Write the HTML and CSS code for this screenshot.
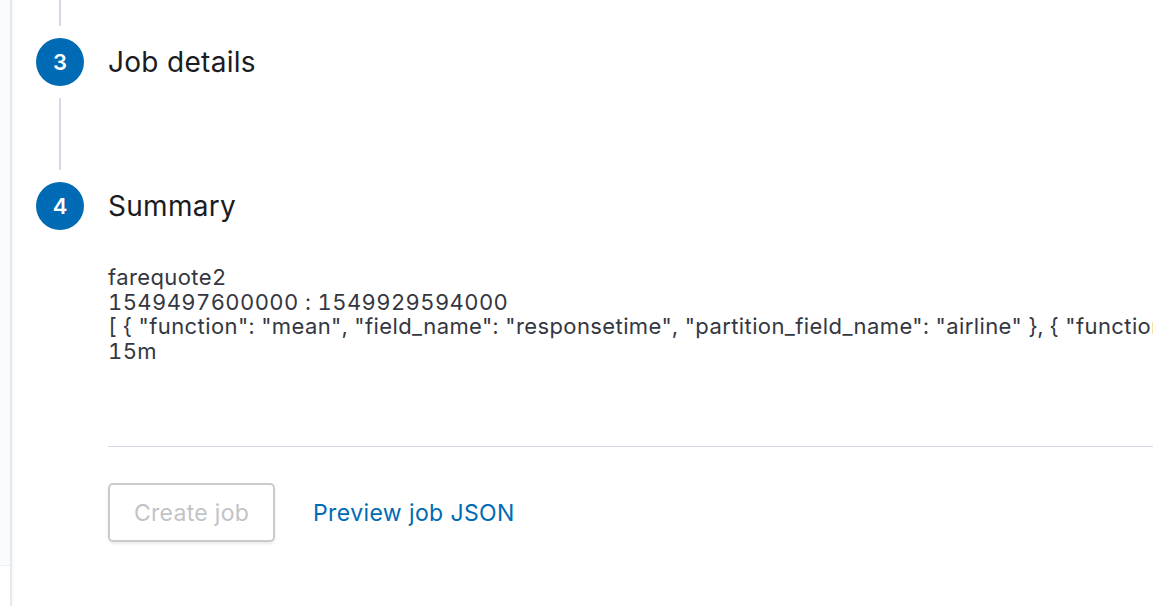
FILE: index.html
```html
<!DOCTYPE html>
<html>
<head>
<meta charset="utf-8">
<link rel="stylesheet" href="styles.css">
</head>
<body>
<div class="page">
  <div class="side">
    <div class="side-fill"></div>
    <div class="side-bottom"></div>
  </div>
  <div class="panel">
    <div class="steps">
      <div class="step">
        <div class="rail">
          <div class="line line-top"></div>
        </div>
      </div>
      <div class="step">
        <div class="rail">
          <div class="num">3</div>
          <div class="line line-mid"></div>
        </div>
        <div class="content">
          <h2 class="title">Job details</h2>
        </div>
      </div>
      <div class="step">
        <div class="rail">
          <div class="num">4</div>
        </div>
        <div class="content">
          <h2 class="title">Summary</h2>
          <div class="summary">
            <div>farequote2</div>
            <div>1549497600000 : 1549929594000</div>
            <div class="nowrap">[ { "function": "mean", "field_name": "responsetime", "partition_field_name": "airline" }, { "function": "mean", "field_name": "responsetime" } ]</div>
            <div>15m</div>
          </div>
          <hr class="rule">
          <div class="actions">
            <button class="btn" disabled>Create job</button>
            <a class="link" href="#">Preview job JSON</a>
          </div>
        </div>
      </div>
    </div>
  </div>
</div>
</body>
</html>
```

FILE: styles.css
```css
html, body {
  margin: 0;
  padding: 0;
  background: #ffffff;
  overflow: hidden;
}
body {
  font-family: Inter, "Noto Sans", sans-serif;
  color: #1a1c21;
  width: 1153px;
  height: 606px;
}
.page {
  display: flex;
  height: 606px;
}
.side {
  width: 10px;
  flex: none;
  display: flex;
  flex-direction: column;
  background: #fafbfd;
}
.side-fill {
  height: 565px;
  border-bottom: 1px solid #eef0f4;
}
.side-bottom {
  flex: 1;
  background: #ffffff;
}
.panel {
  flex: 1;
  border-left: 2px solid #e6e9f0;
  box-shadow: inset 3px 0 3px -2px rgba(0,0,0,0.04);
  overflow: hidden;
}
.steps {
  display: flex;
  flex-direction: column;
}
.step {
  display: flex;
}
.rail {
  width: 96px;
  flex: none;
  display: flex;
  flex-direction: column;
  align-items: center;
}
.line {
  width: 2px;
  background: #d3dae6;
}
.line-top {
  height: 26px;
}
.line-mid {
  height: 72px;
  margin-top: 12px;
  margin-bottom: 12px;
}
.step:nth-child(1) { height: 38px; }
.num {
  width: 48px;
  height: 48px;
  border-radius: 50%;
  background: #006bb4;
  color: #fff;
  font-weight: 600;
  font-size: 22px;
  display: flex;
  align-items: center;
  justify-content: center;
}
.content {
  flex: 1;
  min-width: 0;
}
.title {
  margin: 0;
  font-size: 28px;
  font-weight: 400;
  line-height: 48px;
  color: #1a1c21;
  letter-spacing: 0.3px;
}
.summary {
  margin-top: 35px;
  font-size: 22px;
  line-height: 24.5px;
  color: #343741;
  letter-spacing: 0.4px;
  font-variant-numeric: tabular-nums;
}
.nowrap {
  white-space: nowrap;
}
.rule {
  border: none;
  border-top: 1px solid #d3dae6;
  margin: 83px 0 0 0;
  height: 0;
}
.actions {
  display: flex;
  align-items: center;
  gap: 38px;
  margin-top: 36px;
}
.btn {
  width: 167px;
  height: 59px;
  border: 2px solid #c9cbcf;
  border-radius: 5px;
  background: #fff;
  color: #c2c3c6;
  font-family: Inter, "Noto Sans", sans-serif;
  font-size: 23px;
  letter-spacing: 0.3px;
  box-shadow: 0 2px 3px rgba(0,0,0,0.08);
  padding: 0;
}
.link {
  color: #006bb4;
  text-decoration: none;
  font-size: 23px;
  letter-spacing: 0.4px;
}
```
